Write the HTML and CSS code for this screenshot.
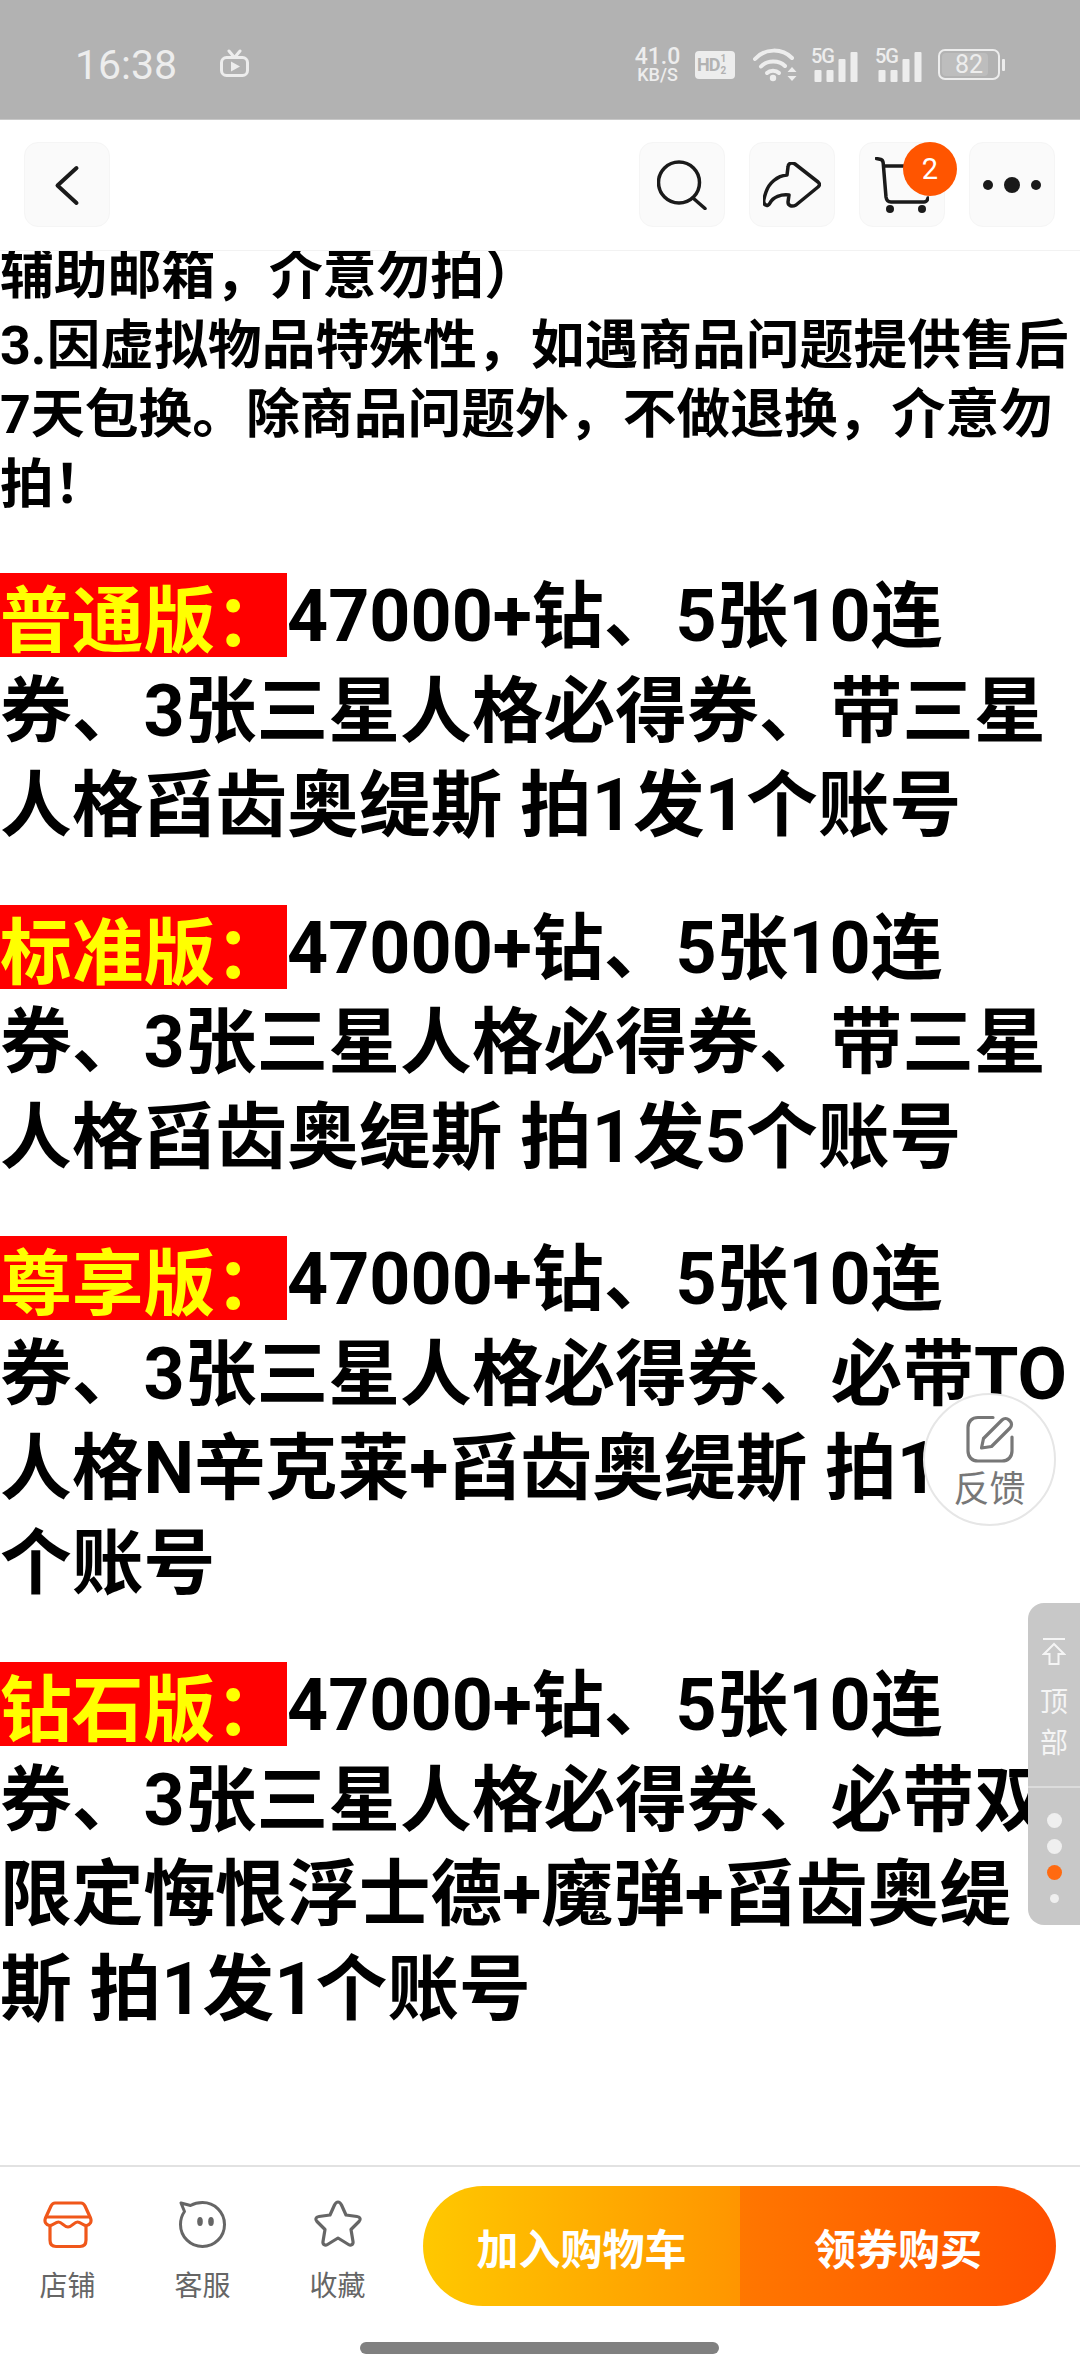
FILE: index.html
```html
<!DOCTYPE html>
<html lang="zh-CN">
<head>
<meta charset="utf-8">
<title>商品详情</title>
<link rel="stylesheet" href="styles.css">
</head>
<body>
<div class="page">
  <div class="statusbar">
    <div class="status-left">
      <span class="time">16:38</span>
      <svg class="tv" viewBox="0 0 29 28" width="29" height="28"><path d="M9 2l5 6M20 2l-5 6" fill="none" stroke="#ededed" stroke-width="3" stroke-linecap="round"/><rect x="1.500" y="8.500" width="26" height="18" rx="5" fill="none" stroke="#ededed" stroke-width="3"/><path d="M11 12.500l9 5-9 5z" fill="#ededed"/></svg>
    </div>
    <div class="status-right">
      <div class="speed"><span class="speed-num">41.0</span><span class="speed-unit">KB/S</span></div>
      <div class="hd"><span>HD</span><span class="hd-frac"><i>1</i><i>2</i></span></div>
      <svg class="wifi" viewBox="0 0 44 34" width="44" height="34"><path d="M2 11C12 0 29 0 39 10" fill="none" stroke="#ededed" stroke-width="4" stroke-linecap="round"/><path d="M8 18.500C14 12 26 12 32 18" fill="none" stroke="#ededed" stroke-width="4" stroke-linecap="round"/><path d="M14 25C17 22 23 22 26 25" fill="none" stroke="#ededed" stroke-width="4" stroke-linecap="round"/><circle cx="20" cy="30" r="3.200" fill="#ededed"/><path d="M39 19l4.500 5h-9zM34.500 28h9L39 33z" fill="#ededed"/></svg>
      <div class="signal"><span class="five-g">5G</span><svg viewBox="0 0 47 33" width="47" height="33"><rect x="3.500" y="21" width="7" height="12" rx="1" fill="#ededed"/><rect x="15.500" y="21" width="7" height="12" rx="1" fill="#ededed"/><rect x="27.500" y="10" width="7" height="23" rx="1" fill="#ededed"/><rect x="39.500" y="3" width="7" height="30" rx="1" fill="#ededed"/></svg></div>
      <div class="signal signal-second"><span class="five-g">5G</span><svg viewBox="0 0 47 33" width="47" height="33"><rect x="3.500" y="21" width="7" height="12" rx="1" fill="#ededed"/><rect x="15.500" y="21" width="7" height="12" rx="1" fill="#ededed"/><rect x="27.500" y="10" width="7" height="23" rx="1" fill="#ededed"/><rect x="39.500" y="3" width="7" height="30" rx="1" fill="#ededed"/></svg></div>
      <div class="battery"><span class="battery-level"></span><span class="battery-num">82</span><span class="battery-nub"></span></div>
    </div>
  </div>

  <header class="navbar">
    <button class="nav-btn" aria-label="返回">
      <svg viewBox="0 0 48 48" width="48" height="48"><path d="M33.500 7L14.500 24.500L33.500 42" fill="none" stroke="#1a1a1a" stroke-width="4" stroke-linecap="round" stroke-linejoin="round"/></svg>
    </button>
    <div class="nav-spacer"></div>
    <button class="nav-btn" aria-label="搜索">
      <svg viewBox="0 0 50 50" width="50" height="50"><circle cx="22" cy="22.500" r="20.500" fill="none" stroke="#1a1a1a" stroke-width="3.500"/><path d="M36 38l12 10.500" fill="none" stroke="#1a1a1a" stroke-width="3.500" stroke-linecap="round"/></svg>
    </button>
    <button class="nav-btn" aria-label="分享">
      <svg viewBox="0 0 58 46" width="58" height="46"><path d="M3 43C-1 42 1 36 3 30C6 21 14 14 24 13L25 5C25 1 29 0 32 2L55 20C57 22 57 23 55 25L33 43C29 45 25 44 25 40L26 33C18 32 10 35 7 41C6 43 4 44 3 43Z" fill="none" stroke="#1a1a1a" stroke-width="3.500" stroke-linejoin="round"/></svg>
    </button>
    <button class="nav-btn nav-cart" aria-label="购物车">
      <svg viewBox="0 0 54 56" width="54" height="56"><path d="M1.500 1.500L6 2.500C7.500 3 8 4 8.200 6L11 40C11.500 43.500 13 45 16 45H49C51.500 45 52.500 43.500 53 41M8.500 9H48" fill="none" stroke="#1a1a1a" stroke-width="3.500" stroke-linecap="round" stroke-linejoin="round"/><circle cx="15" cy="52" r="4" fill="#1a1a1a"/><circle cx="47" cy="52" r="4" fill="#1a1a1a"/></svg>
      <span class="badge">2</span>
    </button>
    <button class="nav-btn" aria-label="更多">
      <svg viewBox="0 0 60 60" width="60" height="60"><circle cx="6" cy="30" r="5" fill="#1a1a1a"/><circle cx="30" cy="30" r="8" fill="#1a1a1a"/><circle cx="54" cy="30" r="5" fill="#1a1a1a"/></svg>
    </button>
  </header>

  <main class="content">
    <div class="notes">
      <p>辅助邮箱，介意勿拍）</p>
      <p>3.因虚拟物品特殊性，如遇商品问题提供售后7天包换。除商品问题外，不做退换，介意勿拍！</p>
    </div>
    <p class="plan"><span class="tag">普通版：</span>47000+钻、5张10连券、3张三星人格必得券、带三星人格舀齿奥缇斯 拍1发1个账号</p>
    <p class="plan"><span class="tag">标准版：</span>47000+钻、5张10连券、3张三星人格必得券、带三星人格舀齿奥缇斯 拍1发5个账号</p>
    <p class="plan"><span class="tag">尊享版：</span>47000+钻、5张10连券、3张三星人格必得券、必带TO人格N辛克莱+舀齿奥缇斯 拍1发1个账号</p>
    <p class="plan"><span class="tag">钻石版：</span>47000+钻、5张10连券、3张三星人格必得券、必带双限定悔恨浮士德+魔弹+舀齿奥缇斯 拍1发1个账号</p>
  </main>

  <footer class="bottombar">
    <div class="tabs">
      <div class="tab">
        <svg viewBox="0 0 50 50" width="50" height="50"><path d="M12 4H38C40 4 41 5 42 7L47.500 19C49 23 47 26 43.500 26.500C40 27 38 23 34.500 23C31 23 29 28 25 28C21 28 19 23 15.500 23C12 23 10 27 6.500 26.500C3 26 1 23 2.500 19L8 7C9 5 10 4 12 4Z" fill="none" stroke="#f0571a" stroke-width="3.200" stroke-linejoin="round"/><path d="M3 18H47" fill="none" stroke="#f0571a" stroke-width="3.200"/><path d="M7 27V41C7 45 9 47.500 13 47.500H37C41 47.500 43 45 43 41V27" fill="none" stroke="#f0571a" stroke-width="3.200"/></svg>
        <span class="tab-label">店铺</span>
      </div>
      <div class="tab">
        <svg viewBox="0 0 50 50" width="50" height="50"><path d="M3 4L12.500 6.500C16 4.500 20 3.500 24.500 3.500C36.500 3.500 46.500 13 46.500 25.500S36.500 47.500 24.500 47.500S2.500 38 2.500 25.500C2.500 20.500 4 16 6.500 12.500Z" fill="none" stroke="#666" stroke-width="3" stroke-linejoin="round"/><ellipse cx="22" cy="22.500" rx="2.800" ry="4.500" fill="#666"/><ellipse cx="33" cy="22.500" rx="2.800" ry="4.500" fill="#666"/></svg>
        <span class="tab-label">客服</span>
      </div>
      <div class="tab">
        <svg viewBox="0 0 50 50" width="50" height="50"><path d="M25 3c1.500 0 2.500 1 3.500 3l4.500 10 11 1.500c3.500.5 4 3 2 5l-8 8 2 12c.5 3-2 4.500-4.500 3L25 39l-10.500 6.500c-2.500 1.500-5 0-4.500-3l2-12-8-8c-2-2-1.500-4.500 2-5L17 16l4.500-10c1-2 2-3 3.500-3z" fill="none" stroke="#666" stroke-width="3.200" stroke-linejoin="round"/></svg>
        <span class="tab-label">收藏</span>
      </div>
    </div>
    <div class="actions">
      <button class="btn-cart">加入购物车</button>
      <button class="btn-buy">领券购买</button>
    </div>
    <div class="homebar"></div>
  </footer>

  <div class="feedback">
    <svg viewBox="0 0 48 48" width="48" height="48"><path d="M27 2.500H12C6 2.500 2 6.500 2 12.500V36C2 42 6 46 12 46H36C42 46 46 42 46 36V22" fill="none" stroke="#777" stroke-width="3.200" stroke-linecap="round"/><path d="M15.500 33L17.500 23.500L36 5C38 3 41 3 43 5L44 6C46 8 46 11 44 13L25.500 31.500Z" fill="none" stroke="#777" stroke-width="3.200" stroke-linejoin="round"/></svg>
    <span class="feedback-label">反馈</span>
  </div>

  <aside class="sidetool">
    <div class="side-top">
      <svg viewBox="0 0 24 28" width="24" height="28"><path d="M1 1H23M12 6L2 16H7.500V26H16.500V16H22Z" fill="none" stroke="#f5f5f5" stroke-width="2"/></svg>
      <span class="side-text">顶</span>
      <span class="side-text">部</span>
    </div>
    <div class="side-dots">
      <span class="dot"></span>
      <span class="dot"></span>
      <span class="dot active"></span>
      <span class="dot small"></span>
    </div>
  </aside>
</div>
</body>
</html>
```
FILE: styles.css
```css
* { box-sizing: border-box; }
html, body { margin: 0; padding: 0; background: #fff; }
body { font-family: "Noto Sans CJK SC", Roboto, sans-serif; }
.page { position: relative; width: 1080px; height: 2375px; overflow: hidden; display: flex; flex-direction: column; background: #fff; }

.statusbar { height: 120px; flex: none; background: #b2b2b2; border-bottom: 1px solid #c8c8c8; display: flex; justify-content: space-between; align-items: center; padding: 10px 80px 0 75px; color: #ededed; font-family: Roboto, sans-serif; }
.status-left { display: flex; align-items: center; gap: 43px; }
.time { font-size: 41px; line-height: 44px; }
.tv { margin-top: -3px; }
.status-right { display: flex; align-items: center; }
.speed { display: flex; flex-direction: column; align-items: center; line-height: 1; font-weight: 500; width: 45px; }
.speed-num { font-size: 23px; height: 21px; }
.speed-unit { font-size: 18px; }
.hd { display: flex; align-items: center; width: 40px; height: 28px; background: #ededed; color: #b2b2b2; border-radius: 4px; font-size: 18px; font-weight: 700; padding-left: 2px; letter-spacing: -1px; margin-left: 15px; }
.hd-frac { display: flex; flex-direction: column; font-size: 10px; line-height: 12px; margin-left: 1px; }
.hd-frac i { font-style: normal; }
.wifi { margin-left: 18px; }
.signal { position: relative; width: 47px; height: 34px; display: flex; align-items: flex-end; margin-left: 14px; }
.signal-second { margin-left: 17px; }
.five-g { position: absolute; left: 0; top: -2px; font-size: 20px; font-weight: 500; line-height: 20px; letter-spacing: -1px; }
.battery { position: relative; width: 62px; height: 31px; border: 2px solid #ededed; border-radius: 7px; display: flex; align-items: center; justify-content: center; margin-left: 16px; }
.battery-level { position: absolute; left: 2px; top: 2px; bottom: 2px; width: 46px; background: #bdbdbd; border-radius: 4px; }
.battery-num { position: relative; font-size: 25px; line-height: 1; }
.battery-nub { position: absolute; right: -7px; top: 8px; width: 3px; height: 12px; background: #ededed; border-radius: 1px; }

.navbar { height: 131px; flex: none; background: #fff; display: flex; align-items: flex-start; gap: 24px; padding: 22px 25px 0 24px; border-bottom: 1px solid #f2f2f2; position: relative; z-index: 2; }
.nav-spacer { flex: 1; }
.nav-btn { position: relative; width: 86px; height: 85px; padding: 0; border: 1px solid #f5f5f5; border-radius: 14px; background: #fafafa; display: flex; align-items: center; justify-content: center; }
.badge { position: absolute; left: 43px; top: -1px; width: 54px; height: 54px; border-radius: 50%; background: #ff5500; color: #fff; font-family: Roboto, sans-serif; font-size: 29px; line-height: 54px; text-align: center; }

.content { flex: 1; min-height: 0; overflow: hidden; color: #000; font-family: Roboto, "Noto Sans CJK SC", sans-serif; font-weight: 700; }
.content p { margin: 0; }
.notes { font-size: 53.800px; line-height: 69.500px; margin-top: -10px; margin-bottom: 51px; }
.content .plan { font-size: 71.750px; line-height: 94.500px; margin-bottom: 48px; }
.tag { background: #ff0000; color: #ffff00; font-family: "Noto Sans CJK SC", sans-serif; line-height: 84px; display: inline-block; height: 84px; vertical-align: -5px; }

.bottombar { position: relative; height: 210px; flex: none; border-top: 2px solid #e2e2e2; background: #fff; display: flex; align-items: flex-start; padding: 19px 24px 0 0; }
.tabs { display: flex; width: 423px; padding-top: 13px; }
.tab { width: 135px; display: flex; flex-direction: column; align-items: center; }
.tab-label { font-size: 28px; line-height: 36px; color: #666; margin-top: 17px; }
.actions { flex: 1; display: flex; height: 120px; border-radius: 60px; overflow: hidden; }
.actions button { border: 0; padding: 0; color: #fff; font-family: "Noto Sans CJK SC", sans-serif; font-size: 42px; font-weight: 700; }
.btn-cart { width: 317px; background: linear-gradient(90deg, #ffc800, #ff9500); }
.btn-buy { flex: 1; background: linear-gradient(90deg, #ff7700, #ff4f00); }
.homebar { position: absolute; left: 360px; top: 175px; width: 359px; height: 12px; border-radius: 6px; background: #808080; }

.feedback { position: absolute; left: 923px; top: 1393px; width: 133px; height: 133px; border-radius: 50%; background: #fff; border: 2px solid #e6e6e6; display: flex; flex-direction: column; align-items: center; padding-top: 20px; color: #777; }
.feedback-label { font-size: 36px; line-height: 46px; margin-top: 0; }

.sidetool { position: absolute; left: 1028px; top: 1603px; width: 52px; height: 322px; background: #c8c8c8; border-radius: 16px 0 0 16px; display: flex; flex-direction: column; color: #f5f5f5; }
.side-top { height: 185px; border-bottom: 2px solid #dcdcdc; display: flex; flex-direction: column; align-items: center; padding-top: 35px; }
.side-text { font-size: 28px; line-height: 41px; }
.side-top svg { margin-bottom: 14px; }
.side-dots { display: flex; flex-direction: column; align-items: center; padding-top: 25px; gap: 11px; }
.dot { width: 15px; height: 15px; border-radius: 50%; background: #efefef; }
.dot.active { background: #ff6a10; }
.dot.small { width: 9px; height: 9px; margin-top: 3px; }
```
